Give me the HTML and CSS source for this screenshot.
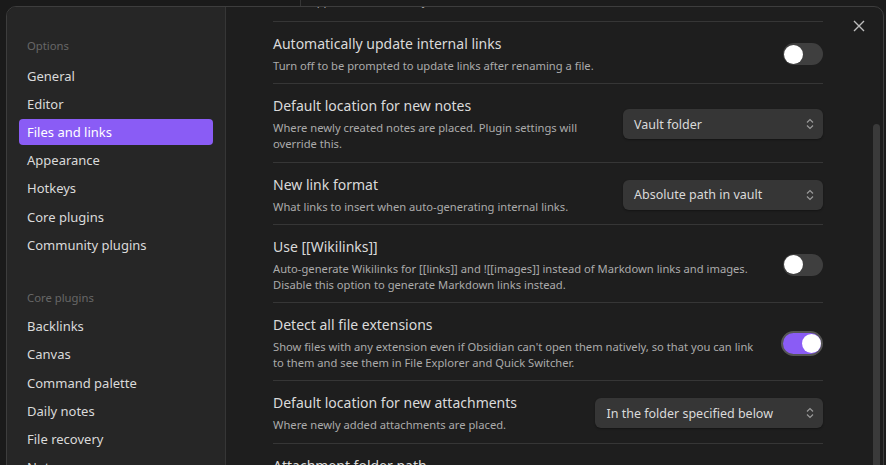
FILE: index.html
```html
<!DOCTYPE html>
<html>
<head>
<meta charset="utf-8">
<link rel="stylesheet" href="styles.css">
</head>
<body>
<div class="modal">
  <nav class="sidebar">
    <div class="nav-header">Options</div>
    <div class="nav-item">General</div>
    <div class="nav-item">Editor</div>
    <div class="nav-item active">Files and links</div>
    <div class="nav-item">Appearance</div>
    <div class="nav-item">Hotkeys</div>
    <div class="nav-item">Core plugins</div>
    <div class="nav-item">Community plugins</div>
    <div class="nav-header group">Core plugins</div>
    <div class="nav-item">Backlinks</div>
    <div class="nav-item">Canvas</div>
    <div class="nav-item">Command palette</div>
    <div class="nav-item">Daily notes</div>
    <div class="nav-item">File recovery</div>
    <div class="nav-item">Note composer</div>
  </nav>
  <main class="panel">
    <div class="settings">
      <div class="row first">
        <div class="info">
          <div class="name">Deleted files</div>
          <div class="desc">What happens to a file after you delete it.</div>
        </div>
      </div>
      <div class="row">
        <div class="info">
          <div class="name">Automatically update internal links</div>
          <div class="desc">Turn off to be prompted to update links after renaming a file.</div>
        </div>
        <div class="toggle"><span class="knob"></span></div>
      </div>
      <div class="row">
        <div class="info">
          <div class="name">Default location for new notes</div>
          <div class="desc">Where newly created notes are placed. Plugin settings will<br>override this.</div>
        </div>
        <div class="select">Vault folder<svg class="chev" width="8" height="12" viewBox="0 0 8 12"><path d="M1 4.5L4 1.5L7 4.5M1 7.5L4 10.5L7 7.5" fill="none" stroke="#9a9a9a" stroke-width="1.2"/></svg></div>
      </div>
      <div class="row">
        <div class="info">
          <div class="name">New link format</div>
          <div class="desc">What links to insert when auto-generating internal links.</div>
        </div>
        <div class="select">Absolute path in vault<svg class="chev" width="8" height="12" viewBox="0 0 8 12"><path d="M1 4.5L4 1.5L7 4.5M1 7.5L4 10.5L7 7.5" fill="none" stroke="#9a9a9a" stroke-width="1.2"/></svg></div>
      </div>
      <div class="row">
        <div class="info">
          <div class="name">Use [[Wikilinks]]</div>
          <div class="desc">Auto-generate Wikilinks for [[links]] and ![[images]] instead of Markdown links and images.<br>Disable this option to generate Markdown links instead.</div>
        </div>
        <div class="toggle"><span class="knob"></span></div>
      </div>
      <div class="row">
        <div class="info">
          <div class="name">Detect all file extensions</div>
          <div class="desc">Show files with any extension even if Obsidian can't open them natively, so that you can link<br>to them and see them in File Explorer and Quick Switcher.</div>
        </div>
        <div class="toggle on"><span class="knob"></span></div>
      </div>
      <div class="row">
        <div class="info">
          <div class="name">Default location for new attachments</div>
          <div class="desc">Where newly added attachments are placed.</div>
        </div>
        <div class="select">In the folder specified below<svg class="chev" width="8" height="12" viewBox="0 0 8 12"><path d="M1 4.5L4 1.5L7 4.5M1 7.5L4 10.5L7 7.5" fill="none" stroke="#9a9a9a" stroke-width="1.2"/></svg></div>
      </div>
      <div class="row">
        <div class="info">
          <div class="name">Attachment folder path</div>
          <div class="desc">Place newly added attachments under this folder.</div>
        </div>
      </div>
    </div>
    <div class="scrolltrack"><div class="thumb"></div></div>
  </main>
  <button class="close" aria-label="Close"><svg width="12" height="12" viewBox="0 0 12 12"><path d="M1 1L11 11M11 1L1 11" stroke="#bdbdbd" stroke-width="1.4" fill="none"/></svg></button>
</div>
</body>
</html>
```
FILE: styles.css
```css
html, body {
  margin: 0;
  height: 100%;
  overflow: hidden;
}
body {
  background: linear-gradient(to right, #1a1a1a 300px, #363636 300px, #363636 301px, #1c1c1c 301px);
  padding: 6px 2px 0 6px;
  box-sizing: border-box;
  font-family: "Noto Sans", "Liberation Sans", sans-serif;
  color: #dadada;
}
.modal {
  position: relative;
  display: flex;
  width: 878px;
  height: 490px;
  box-sizing: border-box;
  border: 1px solid #3d3d3d;
  border-radius: 10px;
  overflow: hidden;
  background: #1e1e1e;
}
.sidebar {
  width: 194px;
  flex: none;
  background: #262626;
  border-right: 1px solid #363636;
  padding: 29px 12px 0;
  display: flex;
  flex-direction: column;
  gap: 2.1px;
}
.nav-header {
  height: 20px;
  line-height: 20px;
  font-size: 11.3px;
  color: #666;
  padding-left: 8px;
  margin-bottom: 5px;
}
.nav-header.group {
  margin-top: 28.5px;
  margin-bottom: 3px;
}
.nav-item {
  height: 26px;
  line-height: 26px;
  padding-left: 8px;
  font-size: 13px;
  color: #dadada;
  border-radius: 4px;
  white-space: nowrap;
}
.nav-item.active {
  background: #8a5cf5;
  color: #fff;
}
.panel {
  flex: 1;
  display: flex;
  min-width: 0;
}
.settings {
  flex: 1;
  padding: 0 50px 0 47px;
  min-width: 0;
}
.row {
  display: flex;
  align-items: center;
  padding: 12px 0 9.3px;
  border-top: 1px solid #363636;
}
.row.first {
  border-top: none;
  padding-bottom: 12.5px;
  margin-top: -50.5px;
}
.info {
  flex: 1;
  min-width: 0;
  margin-right: 16px;
}
.name {
  font-size: 14px;
  line-height: 20px;
  color: #dadada;
  white-space: nowrap;
}
.desc {
  font-size: 11.2px;
  line-height: 16px;
  color: #ababab;
  margin-top: 4px;
  white-space: nowrap;
}
.toggle {
  flex: none;
  position: relative;
  width: 40px;
  height: 22px;
  border-radius: 11px;
  background: #3f3f3f;
}
.toggle .knob {
  position: absolute;
  left: 1px;
  top: 1.5px;
  width: 19px;
  height: 19px;
  border-radius: 50%;
  background: #fff;
}
.toggle.on {
  width: 38px;
  height: 21px;
  border: 2px solid #555;
  background: #8a5cf5;
  border-radius: 13px;
}
.toggle.on .knob {
  left: auto;
  right: 0;
  top: 1px;
}
.select {
  flex: none;
  position: relative;
  display: flex;
  align-items: center;
  box-sizing: border-box;
  min-width: 200px;
  height: 30px;
  padding: 0 50px 0 11px;
  border-radius: 6px;
  background: #363636;
  box-shadow: 0 1px 2px rgba(0, 0, 0, 0.35);
  font-size: 12.5px;
  color: #dadada;
  white-space: nowrap;
}
.chev {
  position: absolute;
  right: 9px;
  top: 9px;
}
.scrolltrack {
  flex: none;
  width: 7px;
  margin-right: 3px;
  padding-top: 117px;
}
.thumb {
  height: 400px;
  background: #3a3a3a;
  border-radius: 4px;
}
.close {
  position: absolute;
  top: 13px;
  right: 18px;
  width: 12px;
  height: 12px;
  padding: 0;
  border: none;
  background: none;
  display: flex;
}
```
